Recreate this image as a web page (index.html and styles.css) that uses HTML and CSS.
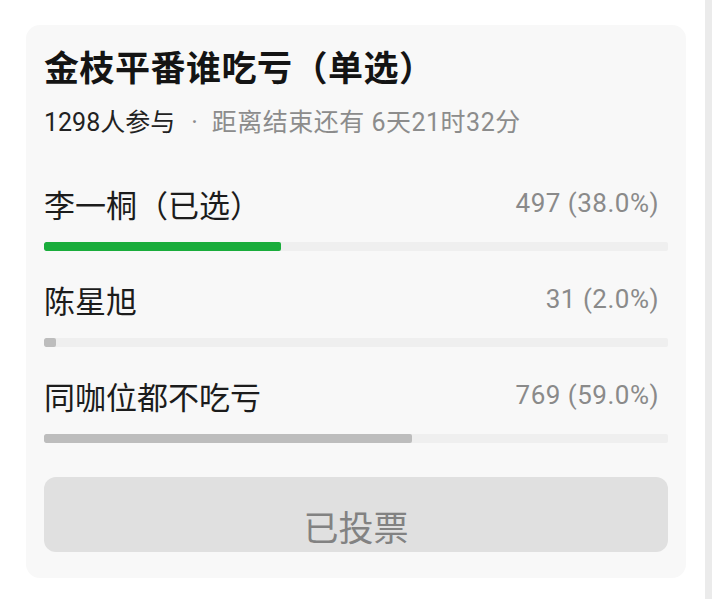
FILE: index.html
```html
<!DOCTYPE html>
<html lang="zh">
<head>
<meta charset="utf-8">
<title>投票</title>
<link rel="stylesheet" href="styles.css">
</head>
<body>
<div class="page">
  <div class="main">
    <div class="card">
      <h1 class="title">金枝平番谁吃亏（单选）</h1>
      <div class="meta"><span class="count">1298人参与</span><span class="dot">·</span><span class="remain">距离结束还有 6天21时32分</span></div>
      <div class="option first">
        <div class="row"><span class="label">李一桐（已选）</span><span class="value">497 (38.0%)</span></div>
        <div class="track"><div class="fill chosen" style="width:38%"></div></div>
      </div>
      <div class="option">
        <div class="row"><span class="label">陈星旭</span><span class="value">31 (2.0%)</span></div>
        <div class="track"><div class="fill" style="width:2%"></div></div>
      </div>
      <div class="option">
        <div class="row"><span class="label">同咖位都不吃亏</span><span class="value">769 (59.0%)</span></div>
        <div class="track"><div class="fill" style="width:59%"></div></div>
      </div>
      <div class="button">已投票</div>
    </div>
  </div>
  <div class="strip"></div>
</div>
</body>
</html>
```
FILE: styles.css
```css
html, body {
  margin: 0;
  padding: 0;
  background: #ffffff;
}
body {
  font-family: "Roboto", "Noto Sans CJK SC", "Noto Sans", sans-serif;
  color: #1c1c1c;
}
.page {
  display: flex;
  width: 712px;
  height: 599px;
}
.main {
  flex: 1;
  padding: 25px 0 0 26px;
}
.strip {
  width: 7px;
  background: #ebebeb;
}
.card {
  width: 660px;
  box-sizing: border-box;
  background: #f8f8f8;
  border-radius: 14px;
  padding: 23px 18px 26px 18px;
}
.title {
  margin: 0;
  font-size: 35px;
  line-height: 44px;
  font-weight: 700;
  color: #141414;
  letter-spacing: 0.5px;
}
.meta {
  margin-top: 16px;
  font-size: 25px;
  line-height: 30px;
  color: #8c8c8c;
}
.count {
  color: #222222;
}
.dot {
  margin: 0 14px 0 16px;
}
.remain {
  letter-spacing: 0.5px;
}
.option {
  margin-top: 30px;
}
.option.first {
  margin-top: 47px;
}
.row {
  display: flex;
  justify-content: space-between;
  align-items: center;
  height: 36px;
}
.label {
  font-size: 31px;
  color: #1c1c1c;
}
.value {
  font-size: 26px;
  letter-spacing: 0.5px;
  color: #8a8a8a;
  padding-right: 9px;
}
.track {
  margin-top: 21px;
  height: 9px;
  background: #efefef;
  border-radius: 2px;
  overflow: hidden;
}
.fill {
  height: 100%;
  background: #bdbdbd;
  border-radius: 2px;
}
.fill.chosen {
  background: #1aad3c;
}
.button {
  margin-top: 34px;
  height: 75px;
  border-radius: 12px;
  background: #e0e0e0;
  color: #828282;
  font-size: 35px;
  display: flex;
  align-items: center;
  justify-content: center;
  padding-top: 22px;
  box-sizing: border-box;
}
```
